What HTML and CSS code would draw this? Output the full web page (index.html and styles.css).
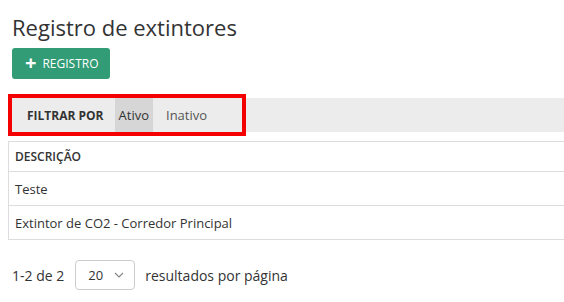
FILE: index.html
```html
<!DOCTYPE html>
<html>
<head>
    <title>Registro de extintores</title>
    <meta charset="UTF-8">
    <link rel="stylesheet" href="styles.css">
</head>
<body>
    <div class="page">
        <h1>Registro de extintores</h1>

        <button class="btn-add"><span class="plus">+</span> REGISTRO</button>

        <div class="filter-bar">
            <div class="filter-group">
                <span class="filter-label">FILTRAR POR</span>
                <span class="filter-item active">Ativo</span>
                <span class="filter-item">Inativo</span>
            </div>
        </div>

        <table class="list">
            <thead>
                <tr><th>DESCRIÇÃO</th></tr>
            </thead>
            <tbody>
                <tr><td>Teste</td></tr>
                <tr><td>Extintor de CO2 - Corredor Principal</td></tr>
            </tbody>
        </table>

        <div class="pager">
            <span>1-2 de 2</span>
            <div class="page-size">
                <span>20</span>
                <svg width="10" height="6" viewBox="0 0 10 6"><path d="M1 1 L5 5 L9 1" fill="none" stroke="#888" stroke-width="1.2"/></svg>
            </div>
            <span>resultados por página</span>
        </div>
    </div>
</body>
</html>
```

FILE: styles.css
```css
html, body {
    overflow: hidden;
}
body {
    margin: 0;
    font-family: "Open Sans", Arial, sans-serif;
    color: #333;
    background: #fff;
}
.page {
    width: 760px;
    padding-left: 12px;
}
h1 {
    font-size: 22px;
    font-weight: normal;
    line-height: 30px;
    margin: 12px 0 6px;
    color: #333;
}
.btn-add {
    display: inline-flex;
    align-items: center;
    height: 31px;
    padding: 0 11px 0 13px;
    border: none;
    border-radius: 3px;
    background: #319c75;
    color: #fff;
    font-family: "Open Sans", Arial, sans-serif;
    font-size: 12px;
}
.btn-add .plus {
    font-size: 20px;
    font-weight: bold;
    line-height: 1;
    margin-right: 6px;
    margin-top: -2px;
}
.filter-bar {
    margin-top: 19px;
    background: #ececec;
    height: 34px;
    display: flex;
}
.filter-group {
    display: flex;
    align-items: stretch;
    width: 230px;
    outline: 4px solid #f50000;
    font-size: 13px;
}
.filter-label {
    font-weight: bold;
    font-size: 12px;
    padding-left: 15px;
    margin-right: 11px;
    display: flex;
    align-items: center;
}
.filter-item {
    display: flex;
    align-items: center;
    padding: 0 4px;
    margin-right: 9px;
    color: #555;
}
.filter-item.active {
    background: #d6d6d6;
    color: #333;
}
.list {
    margin: 9px 0 0 -4px;
    width: 100%;
    border-collapse: collapse;
    border: 1px solid #ddd;
    font-size: 13px;
}
.list th {
    text-align: left;
    font-weight: 600;
    font-size: 12px;
    height: 29px;
    padding: 0 6px;
    border-bottom: 1px solid #ddd;
}
.list td {
    height: 33px;
    padding: 0 6px;
    border-bottom: 1px solid #ddd;
}
.pager {
    display: flex;
    align-items: center;
    margin-top: 20px;
    font-size: 14px;
}
.page-size {
    display: flex;
    align-items: center;
    justify-content: space-between;
    box-sizing: border-box;
    width: 60px;
    height: 30px;
    margin: 0 10px 0 11px;
    padding: 0 10px 0 12px;
    border: 1px solid #ccc;
    border-radius: 4px;
    font-size: 13px;
}
```
